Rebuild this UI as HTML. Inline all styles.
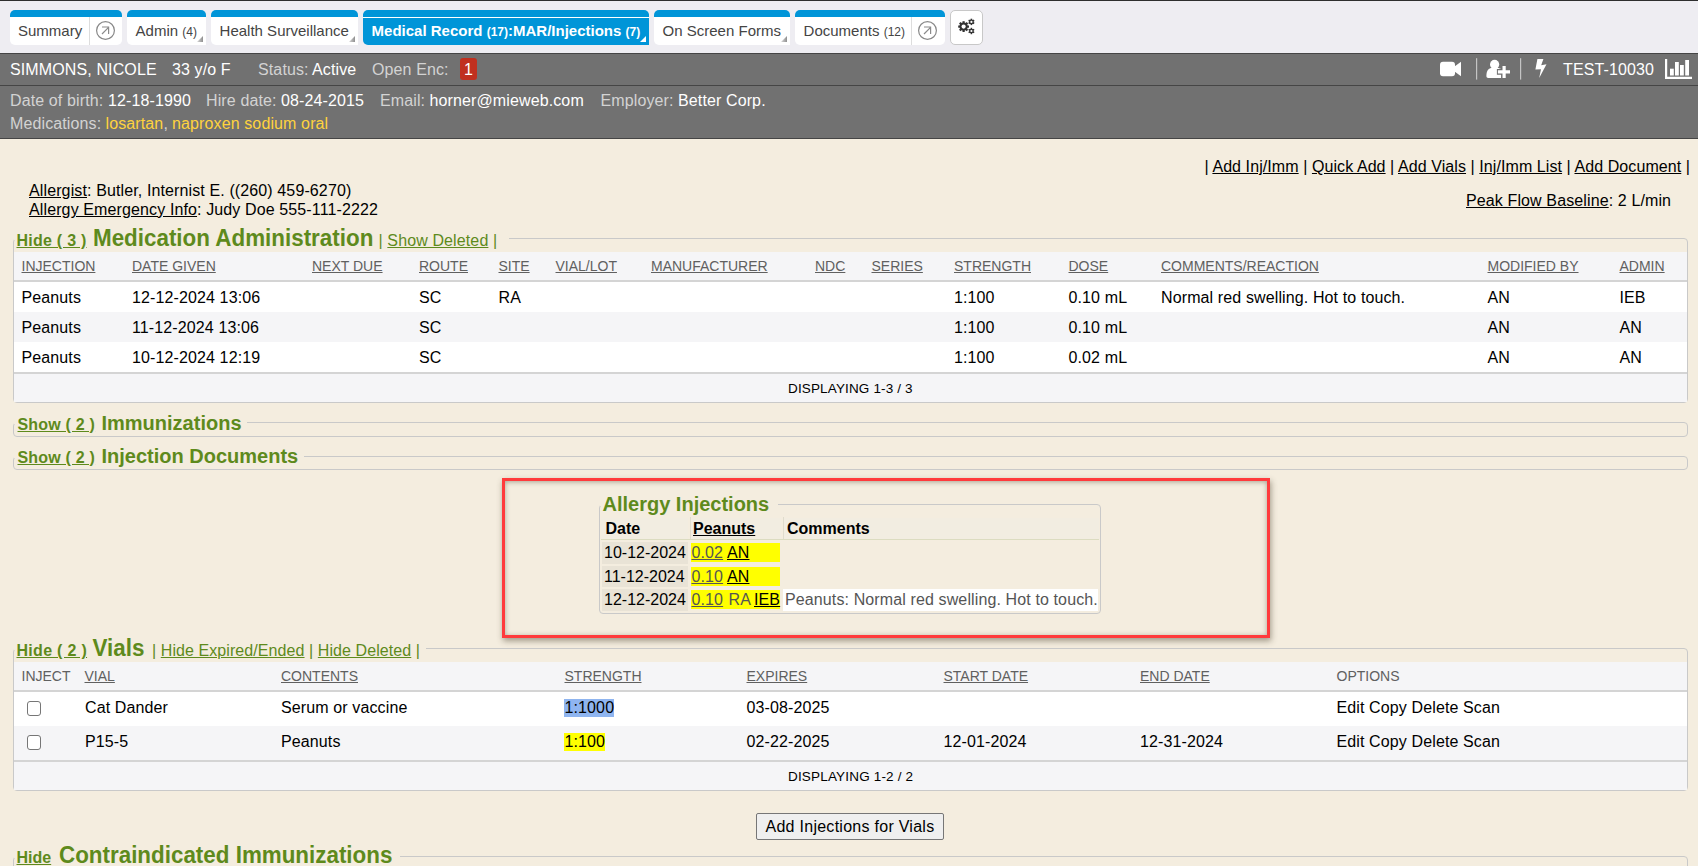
<!DOCTYPE html>
<html><head><meta charset="utf-8">
<style>
*{box-sizing:border-box;margin:0;padding:0}
html,body{width:1698px;height:866px;overflow:hidden}
body{font-family:"Liberation Sans",sans-serif;background:#f4eddf;position:relative;color:#000}
.x{position:absolute;white-space:nowrap;line-height:1}
.b{position:absolute}
.tab{position:absolute;top:10px;height:35px;background:#fff;border-radius:5px;border-top:7px solid #0095d8;font-size:15px;color:#444;white-space:nowrap}
.tab .t{position:absolute;top:5px;left:8.6px}
.tab small{font-size:12px}
.tab .corner{position:absolute;right:3px;bottom:3px;width:6px;height:6px;background:linear-gradient(90deg,#d8d8d8,#8f8f8f);clip-path:polygon(100% 0,100% 100%,0 100%)}
.tab .dv{position:absolute;top:0;bottom:0;width:1px;background:#ddd}
.tab.sq{border-bottom-right-radius:0}
.tab.active{background:#0095d8;color:#fff;font-weight:bold}
.tab.active .corner{background:#fff}
</style></head><body>
<div class="b" style="left:0px;top:0px;width:1698px;height:1px;background:#2e2e2e"></div>
<div class="b" style="left:0px;top:1px;width:1698px;height:52px;background:#eeedf2"></div>
<div class="tab" style="left:10px;width:112px"><span class="t" style="left:8px">Summary</span><div class="dv" style="left:79px"></div>
<svg style="position:absolute;left:85px;top:3px" width="21" height="21" viewBox="0 0 21 21"><circle cx="10.5" cy="10.5" r="8.9" fill="none" stroke="#888" stroke-width="1.2"/><path d="M7 14 L13.6 7.4 M7 7 H13.6 V14" fill="none" stroke="#8a8a8a" stroke-width="1.2"/></svg></div>
<div class="tab sq" style="left:127px;width:79px"><span class="t">Admin <small>(4)</small></span><div class="corner"></div></div>
<div class="tab sq" style="left:211px;width:147px"><span class="t">Health Surveillance</span><div class="corner"></div></div>
<div class="tab active sq" style="left:363px;width:286px"><div class="b" style="left:0;top:0;width:100%;height:1px;background:#fff"></div><span class="t">Medical Record <small>(17)</small>:MAR/Injections <small>(7)</small></span><div class="corner"></div></div>
<div class="tab sq" style="left:654px;width:136px"><span class="t">On Screen Forms</span><div class="corner"></div></div>
<div class="tab" style="left:795px;width:150px"><span class="t">Documents <small>(12)</small></span><div class="dv" style="left:116px"></div>
<svg style="position:absolute;left:122px;top:3px" width="21" height="21" viewBox="0 0 21 21"><circle cx="10.5" cy="10.5" r="8.9" fill="none" stroke="#888" stroke-width="1.2"/><path d="M7 14 L13.6 7.4 M7 7 H13.6 V14" fill="none" stroke="#8a8a8a" stroke-width="1.2"/></svg></div>
<div class="b" style="left:950px;top:10px;width:33px;height:35px;background:#fff;border:1px solid #c8c8c8;border-radius:5px"></div>
<svg class="b" style="left:955px;top:15px" width="24" height="24" viewBox="0 0 24 24">
<g fill="#333">
<circle cx="8.6" cy="11.6" r="4.1"/>
<g transform="translate(8.6 11.6)">
<rect x="-1.1" y="-5.4" width="2.2" height="10.8"/>
<rect x="-1.1" y="-5.4" width="2.2" height="10.8" transform="rotate(45)"/>
<rect x="-1.1" y="-5.4" width="2.2" height="10.8" transform="rotate(90)"/>
<rect x="-1.1" y="-5.4" width="2.2" height="10.8" transform="rotate(135)"/>
</g>
<circle cx="16.4" cy="6.9" r="2.3"/>
<g transform="translate(16.4 6.9)">
<rect x="-0.8" y="-3.2" width="1.6" height="6.4"/>
<rect x="-0.8" y="-3.2" width="1.6" height="6.4" transform="rotate(60)"/>
<rect x="-0.8" y="-3.2" width="1.6" height="6.4" transform="rotate(120)"/>
</g>
<circle cx="16.4" cy="16" r="2.3"/>
<g transform="translate(16.4 16)">
<rect x="-0.8" y="-3.2" width="1.6" height="6.4"/>
<rect x="-0.8" y="-3.2" width="1.6" height="6.4" transform="rotate(60)"/>
<rect x="-0.8" y="-3.2" width="1.6" height="6.4" transform="rotate(120)"/>
</g>
</g>
<g fill="#fff"><circle cx="8.6" cy="11.6" r="2.1"/><circle cx="16.4" cy="6.9" r="1.1"/><circle cx="16.4" cy="16" r="1.1"/></g>
</svg>

<div class="b" style="left:0px;top:53px;width:1698px;height:1px;background:#454545"></div>
<div class="b" style="left:0px;top:54px;width:1698px;height:31px;background:#717171"></div>
<div class="b" style="left:0px;top:85px;width:1698px;height:1px;background:#454545"></div>
<div class="b" style="left:0px;top:86px;width:1698px;height:52px;background:#717171"></div>
<div class="b" style="left:0px;top:138px;width:1698px;height:1px;background:#454545"></div>
<span class="x" style="left:10px;top:61.96px;font-size:16px;letter-spacing:0.12px;color:#ffffff;">SIMMONS, NICOLE</span>
<span class="x" style="left:172px;top:61.96px;font-size:16px;letter-spacing:0.12px;color:#ffffff;">33 y/o F</span>
<span class="x" style="left:258px;top:61.96px;font-size:16px;letter-spacing:0.12px;color:#d3d3d3;">Status:</span>
<span class="x" style="left:312px;top:61.96px;font-size:16px;letter-spacing:0.12px;color:#ffffff;">Active</span>
<span class="x" style="left:372px;top:61.96px;font-size:16px;letter-spacing:0.12px;color:#d3d3d3;">Open Enc:</span>
<div class="b" style="left:460px;top:58px;width:17px;height:22px;background:#c0301f;border-radius:3px"></div>
<span class="x" style="left:464px;top:61.96px;font-size:16px;letter-spacing:0.12px;color:#ffffff;">1</span>
<span class="x" style="left:1563px;top:61.96px;font-size:16px;letter-spacing:0.12px;color:#ffffff;">TEST-10030</span>
<svg class="b" style="left:1430px;top:54px" width="268" height="31" viewBox="0 0 268 31">
<rect x="10" y="7.7" width="15" height="14.5" rx="3" fill="#fff"/>
<path d="M24.5 12.5 L31 7.7 V22.2 L24.5 17.5 Z" fill="#fff"/>
<rect x="46" y="4.2" width="1.2" height="21.4" fill="#c4c4c4"/>
<circle cx="64.6" cy="10.4" r="4.6" fill="#fff"/>
<path d="M56.4 21.9 C56.4 16.6 58.6 14.1 62.2 14.1 H67.2 C69.2 14.1 70.6 14.6 71.6 15.6 V23.9 H58.2 C57.1 23.9 56.4 23.1 56.4 21.9 Z" fill="#fff"/>
<path d="M66.9 15.1 H71.1 V11.1 H77.1 V15.1 H81 V20.7 H77.1 V24.9 H71.1 V20.7 H66.9 Z" fill="#717171"/>
<path d="M72.5 12.1 H75.7 V16.3 H80 V19.5 H75.7 V23.9 H72.5 V19.5 H67.9 V16.3 H72.5 Z" fill="#fff"/>
<rect x="90" y="4.2" width="1.2" height="21.4" fill="#c4c4c4"/>
<path d="M107.4 5.1 L113.4 5.1 L111.2 11.3 L116.5 10.2 L109.2 24.1 L111 15.3 L105.4 15.5 Z" fill="#fff"/>
<path d="M235 5 V24.9 H262 V22.7 H237.2 V5 Z" fill="#fff"/>
<rect x="240" y="14.7" width="3.8" height="6.8" fill="#fff"/>
<rect x="245" y="8" width="3.8" height="13.5" fill="#fff"/>
<rect x="250" y="11" width="3.8" height="10.5" fill="#fff"/>
<rect x="255.2" y="6" width="3.8" height="15.5" fill="#fff"/>
</svg>

<span class="x" style="left:10px;top:93.06px;font-size:16px;letter-spacing:0.12px;color:#d3d3d3;">Date of birth:</span>
<span class="x" style="left:108px;top:93.06px;font-size:16px;letter-spacing:0.12px;color:#ffffff;">12-18-1990</span>
<span class="x" style="left:206px;top:93.06px;font-size:16px;letter-spacing:0.12px;color:#d3d3d3;">Hire date:</span>
<span class="x" style="left:281px;top:93.06px;font-size:16px;letter-spacing:0.12px;color:#ffffff;">08-24-2015</span>
<span class="x" style="left:380px;top:93.06px;font-size:16px;letter-spacing:0.12px;color:#d3d3d3;">Email:</span>
<span class="x" style="left:429.5px;top:93.06px;font-size:16px;letter-spacing:0.12px;color:#ffffff;">horner@mieweb.com</span>
<span class="x" style="left:600.5px;top:93.06px;font-size:16px;letter-spacing:0.12px;color:#d3d3d3;">Employer:</span>
<span class="x" style="left:678px;top:93.06px;font-size:16px;letter-spacing:0.12px;color:#ffffff;">Better Corp.</span>
<span class="x" style="left:10px;top:116.16px;font-size:16px;letter-spacing:0.12px;color:#d3d3d3;">Medications:</span>
<span class="x" style="left:105.5px;top:116.16px;font-size:16px;letter-spacing:0.12px;color:#ffd33d;">losartan<span style='color:#d3d3d3'>,</span></span>
<span class="x" style="left:172px;top:116.16px;font-size:16px;letter-spacing:0.12px;color:#ffd33d;">naproxen sodium oral</span>
<span class="x" style="left:1204.5px;top:158.86px;font-size:16px;letter-spacing:0.08px;">| <u>Add Inj/Imm</u> | <u>Quick Add</u> | <u>Add Vials</u> | <u>Inj/Imm List</u> | <u>Add Document</u> |</span>
<span class="x" style="left:29px;top:182.96px;font-size:16px;letter-spacing:0.12px;"><u>Allergist</u>: Butler, Internist E. ((260) 459-6270)</span>
<span class="x" style="left:29px;top:201.76px;font-size:16px;letter-spacing:0.12px;"><u>Allergy Emergency Info</u>: Judy Doe 555-111-2222</span>
<span class="x" style="left:1466px;top:193.46px;font-size:16px;letter-spacing:0.12px;"><u>Peak Flow Baseline</u>: 2 L/min</span>
<div class="b" style="left:13px;top:238px;width:1675px;height:165px;border:1px solid #c9c9c9;border-radius:4px"></div>
<div class="b" style="left:14px;top:236px;width:495px;height:4px;background:#f4eddf"></div>
<span class="x" style="left:16.5px;top:233.46px;font-size:16px;letter-spacing:0.25px;font-weight:bold;color:#5e8a1c;text-decoration:underline;">Hide ( 3 )</span>
<span class="x" style="left:93px;top:228.04px;font-size:22.4px;font-weight:bold;color:#5e8a1c;display:inline-block;transform:scaleY(1.06);transform-origin:0 19px;">Medication Administration</span>
<span class="x" style="left:378.5px;top:233.46px;font-size:16px;letter-spacing:0.12px;color:#5e8a1c;">| <u>Show Deleted</u> |</span>
<div class="b" style="left:14px;top:252px;width:1673px;height:28px;background:#f5f5f7"></div>
<div class="b" style="left:14px;top:280px;width:1673px;height:2px;background:#d4d4d4"></div>
<div class="b" style="left:14px;top:282px;width:1673px;height:30px;background:#fff"></div>
<div class="b" style="left:14px;top:312px;width:1673px;height:30px;background:#f5f5f7"></div>
<div class="b" style="left:14px;top:342px;width:1673px;height:30px;background:#fff"></div>
<div class="b" style="left:14px;top:372px;width:1673px;height:2px;background:#d4d4d4"></div>
<div class="b" style="left:14px;top:374px;width:1673px;height:28px;background:#f5f5f7"></div>
<span class="x" style="left:21.5px;top:259.15px;font-size:14px;color:#606060;text-decoration:underline;">INJECTION</span>
<span class="x" style="left:132px;top:259.15px;font-size:14px;color:#606060;text-decoration:underline;">DATE GIVEN</span>
<span class="x" style="left:312px;top:259.15px;font-size:14px;color:#606060;text-decoration:underline;">NEXT DUE</span>
<span class="x" style="left:419px;top:259.15px;font-size:14px;color:#606060;text-decoration:underline;">ROUTE</span>
<span class="x" style="left:498.5px;top:259.15px;font-size:14px;color:#606060;text-decoration:underline;">SITE</span>
<span class="x" style="left:555.5px;top:259.15px;font-size:14px;color:#606060;text-decoration:underline;">VIAL/LOT</span>
<span class="x" style="left:651px;top:259.15px;font-size:14px;color:#606060;text-decoration:underline;">MANUFACTURER</span>
<span class="x" style="left:815px;top:259.15px;font-size:14px;color:#606060;text-decoration:underline;">NDC</span>
<span class="x" style="left:871.5px;top:259.15px;font-size:14px;color:#606060;text-decoration:underline;">SERIES</span>
<span class="x" style="left:954px;top:259.15px;font-size:14px;color:#606060;text-decoration:underline;">STRENGTH</span>
<span class="x" style="left:1068.5px;top:259.15px;font-size:14px;color:#606060;text-decoration:underline;">DOSE</span>
<span class="x" style="left:1161px;top:259.15px;font-size:14px;color:#606060;text-decoration:underline;">COMMENTS/REACTION</span>
<span class="x" style="left:1487.5px;top:259.15px;font-size:14px;color:#606060;text-decoration:underline;">MODIFIED BY</span>
<span class="x" style="left:1619.5px;top:259.15px;font-size:14px;color:#606060;text-decoration:underline;">ADMIN</span>
<span class="x" style="left:21.5px;top:290.46px;font-size:16px;letter-spacing:0.12px;">Peanuts</span>
<span class="x" style="left:132px;top:290.46px;font-size:16px;letter-spacing:0.12px;">12-12-2024 13:06</span>
<span class="x" style="left:419px;top:290.46px;font-size:16px;letter-spacing:0.12px;">SC</span>
<span class="x" style="left:498.5px;top:290.46px;font-size:16px;letter-spacing:0.12px;">RA</span>
<span class="x" style="left:954px;top:290.46px;font-size:16px;letter-spacing:0.12px;">1:100</span>
<span class="x" style="left:1068.5px;top:290.46px;font-size:16px;letter-spacing:0.12px;">0.10 mL</span>
<span class="x" style="left:1161px;top:290.46px;font-size:16px;letter-spacing:0.12px;">Normal red swelling. Hot to touch.</span>
<span class="x" style="left:1487.5px;top:290.46px;font-size:16px;letter-spacing:0.12px;">AN</span>
<span class="x" style="left:1619.5px;top:290.46px;font-size:16px;letter-spacing:0.12px;">IEB</span>
<span class="x" style="left:21.5px;top:320.46px;font-size:16px;letter-spacing:0.12px;">Peanuts</span>
<span class="x" style="left:132px;top:320.46px;font-size:16px;letter-spacing:0.12px;">11-12-2024 13:06</span>
<span class="x" style="left:419px;top:320.46px;font-size:16px;letter-spacing:0.12px;">SC</span>
<span class="x" style="left:498.5px;top:320.46px;font-size:16px;letter-spacing:0.12px;"></span>
<span class="x" style="left:954px;top:320.46px;font-size:16px;letter-spacing:0.12px;">1:100</span>
<span class="x" style="left:1068.5px;top:320.46px;font-size:16px;letter-spacing:0.12px;">0.10 mL</span>
<span class="x" style="left:1161px;top:320.46px;font-size:16px;letter-spacing:0.12px;"></span>
<span class="x" style="left:1487.5px;top:320.46px;font-size:16px;letter-spacing:0.12px;">AN</span>
<span class="x" style="left:1619.5px;top:320.46px;font-size:16px;letter-spacing:0.12px;">AN</span>
<span class="x" style="left:21.5px;top:350.46px;font-size:16px;letter-spacing:0.12px;">Peanuts</span>
<span class="x" style="left:132px;top:350.46px;font-size:16px;letter-spacing:0.12px;">10-12-2024 12:19</span>
<span class="x" style="left:419px;top:350.46px;font-size:16px;letter-spacing:0.12px;">SC</span>
<span class="x" style="left:498.5px;top:350.46px;font-size:16px;letter-spacing:0.12px;"></span>
<span class="x" style="left:954px;top:350.46px;font-size:16px;letter-spacing:0.12px;">1:100</span>
<span class="x" style="left:1068.5px;top:350.46px;font-size:16px;letter-spacing:0.12px;">0.02 mL</span>
<span class="x" style="left:1161px;top:350.46px;font-size:16px;letter-spacing:0.12px;"></span>
<span class="x" style="left:1487.5px;top:350.46px;font-size:16px;letter-spacing:0.12px;">AN</span>
<span class="x" style="left:1619.5px;top:350.46px;font-size:16px;letter-spacing:0.12px;">AN</span>
<span class="x" style="left:788px;top:382.17px;font-size:13.5px;letter-spacing:0.15px;">DISPLAYING 1-3 / 3</span>
<div class="b" style="left:13px;top:422px;width:1675px;height:15px;border:1px solid #c9c9c9;border-radius:4px"></div>
<div class="b" style="left:14px;top:420px;width:233px;height:4px;background:#f4eddf"></div>
<span class="x" style="left:17.5px;top:416.66px;font-size:16px;letter-spacing:0.2px;font-weight:bold;color:#5e8a1c;text-decoration:underline;">Show ( 2 )</span>
<span class="x" style="left:101.5px;top:412.67px;font-size:20px;font-weight:bold;color:#5e8a1c;">Immunizations</span>
<div class="b" style="left:13px;top:456px;width:1675px;height:14px;border:1px solid #c9c9c9;border-radius:4px"></div>
<div class="b" style="left:14px;top:454px;width:290px;height:4px;background:#f4eddf"></div>
<span class="x" style="left:17.5px;top:449.66px;font-size:16px;letter-spacing:0.2px;font-weight:bold;color:#5e8a1c;text-decoration:underline;">Show ( 2 )</span>
<span class="x" style="left:101.5px;top:445.67px;font-size:20px;font-weight:bold;color:#5e8a1c;">Injection Documents</span>
<div class="b" style="left:502px;top:478px;width:768px;height:160px;border:3px solid #ff3a3c;box-shadow:inset 0 1px 5px rgba(60,50,30,.4),1px 3px 6px rgba(60,50,30,.45)"></div>
<div class="b" style="left:599px;top:504px;width:502px;height:110px;border:1px solid #c9c9c9;border-radius:4px"></div>
<div class="b" style="left:600px;top:502px;width:178px;height:4px;background:#f4eddf"></div>
<span class="x" style="left:602.5px;top:493.87px;font-size:20px;font-weight:bold;color:#5e8a1c;">Allergy Injections</span>
<div class="b" style="left:601px;top:518px;width:87px;height:21px;background:#f2ede1"></div>
<div class="b" style="left:690px;top:518px;width:91px;height:21px;background:#f2ede1"></div>
<div class="b" style="left:783px;top:518px;width:316px;height:21px;background:#f2ede1"></div>
<div class="b" style="left:690px;top:517px;width:1px;height:22px;background:#e0dccd"></div>
<div class="b" style="left:783px;top:517px;width:1px;height:22px;background:#e0dccd"></div>
<div class="b" style="left:601px;top:539px;width:498px;height:1px;background:#dcdcc0"></div>
<span class="x" style="left:605.5px;top:520.96px;font-size:16px;font-weight:bold;">Date</span>
<span class="x" style="left:693px;top:520.96px;font-size:16px;font-weight:bold;text-decoration:underline;">Peanuts</span>
<span class="x" style="left:787px;top:520.96px;font-size:16px;font-weight:bold;">Comments</span>
<div class="b" style="left:602px;top:542.0px;width:86px;height:21.5px;background:#e9e3d6"></div>
<div class="b" style="left:691px;top:543.0px;width:89px;height:19px;background:#ffff00"></div>
<span class="x" style="left:604px;top:544.96px;font-size:16px;">10-12-2024</span>
<span class="x" style="left:691.5px;top:544.96px;font-size:16px;letter-spacing:0.12px;color:#555;text-decoration:underline;">0.02</span>
<span class="x" style="left:727px;top:544.96px;font-size:16px;letter-spacing:0.12px;text-decoration:underline;">AN</span>
<div class="b" style="left:602px;top:565.5px;width:86px;height:21.5px;background:#e9e3d6"></div>
<div class="b" style="left:691px;top:566.5px;width:89px;height:19px;background:#ffff00"></div>
<span class="x" style="left:604px;top:568.76px;font-size:16px;">11-12-2024</span>
<span class="x" style="left:691.5px;top:568.76px;font-size:16px;letter-spacing:0.12px;color:#555;text-decoration:underline;">0.10</span>
<span class="x" style="left:727px;top:568.76px;font-size:16px;letter-spacing:0.12px;text-decoration:underline;">AN</span>
<div class="b" style="left:602px;top:589.0px;width:86px;height:21.5px;background:#e9e3d6"></div>
<div class="b" style="left:691px;top:590.0px;width:89px;height:19px;background:#ffff00"></div>
<span class="x" style="left:604px;top:591.76px;font-size:16px;">12-12-2024</span>
<span class="x" style="left:691.5px;top:591.76px;font-size:16px;letter-spacing:0.12px;color:#555;text-decoration:underline;">0.10</span>
<div class="b" style="left:783px;top:589.0px;width:315px;height:21.5px;background:#fff"></div>
<span class="x" style="left:728.5px;top:591.76px;font-size:16px;letter-spacing:0.12px;color:#555;">RA</span>
<span class="x" style="left:754px;top:591.76px;font-size:16px;letter-spacing:0.12px;text-decoration:underline;">IEB</span>
<span class="x" style="left:785px;top:591.76px;font-size:16px;letter-spacing:0.12px;color:#555;">Peanuts: Normal red swelling. Hot to touch.</span>
<div class="b" style="left:13px;top:648px;width:1675px;height:143px;border:1px solid #c9c9c9;border-radius:4px"></div>
<div class="b" style="left:14px;top:646px;width:412px;height:4px;background:#f4eddf"></div>
<span class="x" style="left:16.5px;top:643.46px;font-size:16px;letter-spacing:0.3px;font-weight:bold;color:#5e8a1c;text-decoration:underline;">Hide ( 2 )</span>
<span class="x" style="left:92.5px;top:638.04px;font-size:22.4px;font-weight:bold;color:#5e8a1c;display:inline-block;transform:scaleY(1.06);transform-origin:0 19px;">Vials</span>
<span class="x" style="left:152px;top:643.46px;font-size:16px;letter-spacing:0.08px;color:#5e8a1c;">| <u>Hide Expired/Ended</u> | <u>Hide Deleted</u> |</span>
<div class="b" style="left:14px;top:662px;width:1673px;height:28px;background:#f5f5f7"></div>
<div class="b" style="left:14px;top:690px;width:1673px;height:2px;background:#d4d4d4"></div>
<div class="b" style="left:14px;top:692px;width:1673px;height:34px;background:#fff"></div>
<div class="b" style="left:14px;top:726px;width:1673px;height:34px;background:#f5f5f7"></div>
<div class="b" style="left:14px;top:760px;width:1673px;height:2px;background:#d4d4d4"></div>
<div class="b" style="left:14px;top:762px;width:1673px;height:28px;background:#f5f5f7"></div>
<span class="x" style="left:21.5px;top:669.15px;font-size:14px;color:#606060;">INJECT</span>
<span class="x" style="left:84.5px;top:669.15px;font-size:14px;color:#606060;text-decoration:underline;">VIAL</span>
<span class="x" style="left:281px;top:669.15px;font-size:14px;color:#606060;text-decoration:underline;">CONTENTS</span>
<span class="x" style="left:564.5px;top:669.15px;font-size:14px;color:#606060;text-decoration:underline;">STRENGTH</span>
<span class="x" style="left:746.5px;top:669.15px;font-size:14px;color:#606060;text-decoration:underline;">EXPIRES</span>
<span class="x" style="left:943.5px;top:669.15px;font-size:14px;color:#606060;text-decoration:underline;">START DATE</span>
<span class="x" style="left:1140px;top:669.15px;font-size:14px;color:#606060;text-decoration:underline;">END DATE</span>
<span class="x" style="left:1336.5px;top:669.15px;font-size:14px;color:#606060;">OPTIONS</span>
<div class="b" style="left:26.8px;top:701px;width:14.7px;height:14.7px;border:1px solid #767676;border-radius:3px;background:#fff"></div>
<span class="x" style="left:85px;top:700.46px;font-size:16px;letter-spacing:0.12px;">Cat Dander</span>
<span class="x" style="left:281px;top:700.46px;font-size:16px;letter-spacing:0.12px;">Serum or vaccine</span>
<div class="b" style="left:564px;top:699px;width:50px;height:18px;background:#8fb5f0"></div>
<span class="x" style="left:564.5px;top:700.46px;font-size:16px;letter-spacing:0.12px;">1:1000</span>
<span class="x" style="left:746.5px;top:700.46px;font-size:16px;letter-spacing:0.12px;">03-08-2025</span>
<span class="x" style="left:943.5px;top:700.46px;font-size:16px;letter-spacing:0.12px;"></span>
<span class="x" style="left:1140px;top:700.46px;font-size:16px;letter-spacing:0.12px;"></span>
<span class="x" style="left:1336.5px;top:700.46px;font-size:16px;letter-spacing:0.12px;">Edit Copy Delete Scan</span>
<div class="b" style="left:26.8px;top:735px;width:14.7px;height:14.7px;border:1px solid #767676;border-radius:3px;background:#fff"></div>
<span class="x" style="left:85px;top:734.46px;font-size:16px;letter-spacing:0.12px;">P15-5</span>
<span class="x" style="left:281px;top:734.46px;font-size:16px;letter-spacing:0.12px;">Peanuts</span>
<div class="b" style="left:564px;top:733px;width:41px;height:18px;background:#ffff00"></div>
<span class="x" style="left:564.5px;top:734.46px;font-size:16px;letter-spacing:0.12px;">1:100</span>
<span class="x" style="left:746.5px;top:734.46px;font-size:16px;letter-spacing:0.12px;">02-22-2025</span>
<span class="x" style="left:943.5px;top:734.46px;font-size:16px;letter-spacing:0.12px;">12-01-2024</span>
<span class="x" style="left:1140px;top:734.46px;font-size:16px;letter-spacing:0.12px;">12-31-2024</span>
<span class="x" style="left:1336.5px;top:734.46px;font-size:16px;letter-spacing:0.12px;">Edit Copy Delete Scan</span>
<span class="x" style="left:788px;top:769.77px;font-size:13.5px;letter-spacing:0.18px;">DISPLAYING 1-2 / 2</span>
<div class="b" style="left:756px;top:813px;width:188px;height:27px;border:1px solid #767676;border-radius:2px;background:#efefef"></div>
<span class="x" style="left:765.5px;top:819.46px;font-size:16px;letter-spacing:0.27px;">Add Injections for Vials</span>
<div class="b" style="left:13px;top:856px;width:1675px;height:20px;border:1px solid #c9c9c9;border-radius:4px"></div>
<div class="b" style="left:14px;top:854px;width:386px;height:4px;background:#f4eddf"></div>
<span class="x" style="left:16.5px;top:850.06px;font-size:16px;font-weight:bold;color:#5e8a1c;text-decoration:underline;">Hide</span>
<span class="x" style="left:59px;top:845.04px;font-size:22.4px;font-weight:bold;color:#5e8a1c;display:inline-block;transform:scaleY(1.06);transform-origin:0 19px;">Contraindicated Immunizations</span>
</body></html>
